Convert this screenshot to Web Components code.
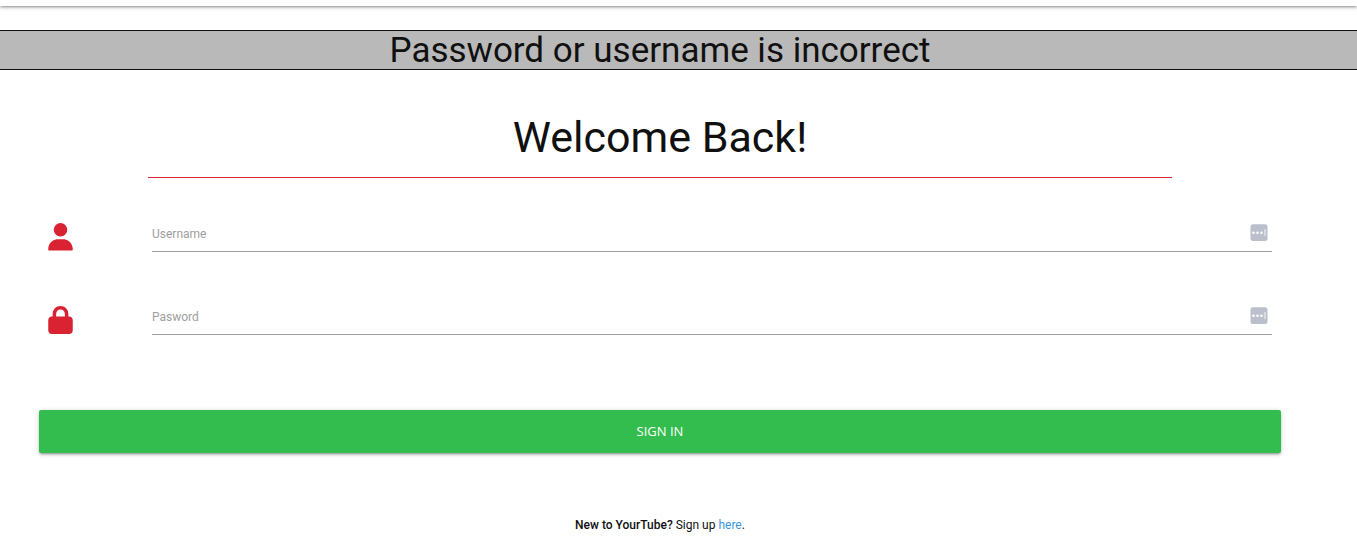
<!DOCTYPE html>
<html lang="en">
<head>
<meta charset="utf-8">
<title>Sign in</title>
<style>
  body { margin: 0; background: #fff; color: #101010; font-family: Roboto, sans-serif; font-size: 12px; line-height: 18px; }
</style>
</head>
<body>
<login-page>
  <alert-banner>Password or username is incorrect</alert-banner>
  <page-title>Welcome Back!</page-title>
  <login-form>
    <login-field label="Username" type="text" name="username"><user-icon></user-icon></login-field>
    <login-field label="Pasword" type="password" name="password"><lock-icon></lock-icon></login-field>
    <submit-button>Sign in</submit-button>
  </login-form>
  <signup-note></signup-note>
</login-page>
<script>
const define = (name, html, setup) => {
  const template = document.createElement('template');
  template.innerHTML = html;
  customElements.define(name, class extends HTMLElement {
    constructor() {
      super();
      this.attachShadow({ mode: 'open' }).append(template.content.cloneNode(true));
    }
    connectedCallback() { if (setup) setup(this, this.shadowRoot); }
  });
};

define('login-page', `
  <style>
    :host { display: block; --gutter: 37px; }
    header { height: 6px; margin-bottom: 24px; background: #fff; box-shadow: 0 2px 2px 0 rgba(0,0,0,.14), 0 3px 1px -2px rgba(0,0,0,.12), 0 1px 5px 0 rgba(0,0,0,.2); }
  </style>
  <header></header>
  <main><slot></slot></main>`);

define('alert-banner', `
  <style>
    :host { display: block; padding: 2px var(--gutter) 0 0; background: #b9b9b9; border: solid #101010; border-width: 1px 0; text-align: center; font-size: 35px; line-height: 36px; }
    p { margin: 0; }
  </style>
  <p role="alert"><slot></slot></p>`);

define('page-title', `
  <style>
    :host { display: block; padding-right: var(--gutter); }
    h1 { box-sizing: border-box; margin: 41px 148px 0; padding-bottom: 14px; border-bottom: 1px solid #d92332; text-align: center; font-size: 43px; line-height: 52px; font-weight: 400; }
  </style>
  <h1><slot></slot></h1>`);

define('login-form', `
  <style>
    :host { display: block; padding-right: var(--gutter); }
    form { display: flex; flex-direction: column; margin: 37px 39px 0; }
  </style>
  <form><slot></slot></form>`);

define('login-field', `
  <style>
    :host { display: flex; margin: 0 9px 46px; }
    .icon { flex: 0 0 104px; padding-top: 8px; color: #d92332; }
    .field { flex: 1; display: flex; align-items: center; box-sizing: border-box; height: 37px; border-bottom: 1px solid #9e9e9e; }
    input { flex: 1; box-sizing: border-box; min-width: 0; height: 36px; padding: 2px 0 0; border: 0; outline: 0; background: none; font: inherit; color: inherit; }
    input::placeholder { color: #9e9e9e; opacity: 1; }
    svg { display: block; margin-right: 4px; }
  </style>
  <div class="icon"><slot></slot></div>
  <div class="field">
    <input>
    <svg width="18" height="18" viewBox="0 0 18 18" aria-hidden="true">
      <rect x=".5" y=".3" width="17" height="16.700" rx="2.500" fill="#bbbfcb"/>
      <g fill="#fff"><circle cx="3.500" cy="8.700" r="1.300"/><circle cx="7.500" cy="8.700" r="1.300"/><circle cx="11.500" cy="8.700" r="1.300"/></g>
      <path d="M15 5v7" stroke="#e4e6eb" stroke-width="1.400"/>
    </svg>
  </div>`, (host, root) => {
    const input = root.querySelector('input');
    const label = host.getAttribute('label');
    input.type = host.getAttribute('type');
    input.name = host.getAttribute('name');
    input.placeholder = label;
    input.setAttribute('aria-label', label);
  });

define('user-icon', `
  <style>:host, svg { display: block; }</style>
  <svg width="25" height="28" viewBox="0 0 448 512" fill="currentColor" aria-hidden="true"><path d="M224 248a124 124 0 1 0 0-248a124 124 0 1 0 0 248zM178 296C79.800 296 0 376 0 474V490C0 500 8 504 18 504H430c10 0 18-4 18-14V474C448 376 368 296 270 296z"/></svg>`);

define('lock-icon', `
  <style>:host, svg { display: block; }</style>
  <svg width="25" height="28" viewBox="0 0 448 512" fill="currentColor" aria-hidden="true"><path d="M144 144v48H304V144c0-44.200-35.800-80-80-80s-80 35.800-80 80zM80 192V144C80 64.500 144.500 0 224 0s144 64.500 144 144v48h16c35.300 0 64 28.700 64 64V448c0 35.300-28.700 64-64 64H64c-35.300 0-64-28.700-64-64V256c0-35.300 28.700-64 64-64z"/></svg>`);

define('submit-button', `
  <style>
    :host { display: block; margin-top: 29px; }
    button { display: block; width: 100%; height: 43px; padding: 0; border: 0; border-radius: 2px; background: #34bd4f; color: #fff; font: 13px/43px "Open Sans", sans-serif; text-transform: uppercase; box-shadow: 0 2px 2px 0 rgba(0,0,0,.14), 0 3px 1px -2px rgba(0,0,0,.12), 0 1px 5px 0 rgba(0,0,0,.2); }
  </style>
  <button type="submit"><slot></slot></button>`);

define('signup-note', `
  <style>
    :host { display: block; padding: 63px var(--gutter) 16px 0; text-align: center; }
    p { margin: 0; }
    b { font-weight: 500; }
    a { color: #3a97e0; text-decoration: none; }
  </style>
  <p><b>New to YourTube?</b> Sign up <a href="#">here</a>.</p>`);
</script>
</body>
</html>
